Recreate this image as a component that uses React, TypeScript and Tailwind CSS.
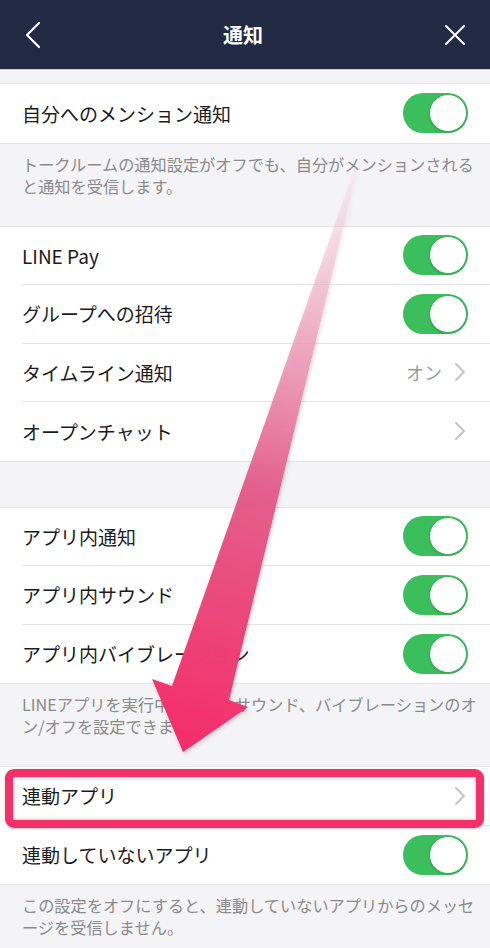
import React from "react";

const FONT = { fontFamily: '"Noto Sans CJK JP", "Noto Sans", sans-serif' };

function Toggle() {
  return (
    <div className="w-[65px] h-[40px] rounded-full bg-[#3bbf5c] flex items-center justify-end pr-[1px] shrink-0">
      <div className="w-[38px] h-[38px] rounded-full bg-white border border-[#36b055] shadow-[0_1px_2px_rgba(0,0,0,0.15)]" />
    </div>
  );
}

function Chevron() {
  return (
    <svg width="12" height="20" viewBox="0 0 12 20" className="shrink-0">
      <path d="M2 2 L10 10 L2 18" fill="none" stroke="#c4c4c8" strokeWidth="2" strokeLinecap="round" strokeLinejoin="round" />
    </svg>
  );
}

type RowProps = { label: string; right: "toggle" | "chevron" | "on"; last?: boolean };

function Row({ label, right, last }: RowProps) {
  return (
    <div className="bg-white pl-[22px]">
      <div className={`h-[58.5px] flex items-center justify-between pr-[22px] ${last ? "" : "border-b border-[#e4e4e6]"}`}>
        <span className="text-[19px] text-[#1a1a1a] leading-none">{label}</span>
        {right === "toggle" && <Toggle />}
        {right === "chevron" && <div className="pr-[2px]"><Chevron /></div>}
        {right === "on" && (
          <div className="flex items-center gap-[12px] pr-[2px]">
            <span className="text-[18px] text-[#9a9a9a] leading-none">オン</span>
            <Chevron />
          </div>
        )}
      </div>
    </div>
  );
}

function Desc({ children }: { children: React.ReactNode }) {
  return (
    <div className="h-[84px] border-t border-[#e4e4e6] border-b pl-[22px] pr-[10px] pt-[9px] text-[16.2px] leading-[22px] text-[#8a8a8a]">
      {children}
    </div>
  );
}

export default function App() {
  return (
    <div className="relative w-[490px] h-[948px] overflow-hidden bg-[#f4f4f6]" style={FONT}>
      {/* Header */}
      <div className="h-[70px] bg-[#222a44] flex items-center justify-between px-[24px] border-b border-[#c9ccd6]">
        <svg width="18" height="28" viewBox="0 0 18 28">
          <path d="M15 2 L3 14 L15 26" fill="none" stroke="#ffffff" strokeWidth="2.2" strokeLinecap="round" strokeLinejoin="round" />
        </svg>
        <span className="text-white font-bold text-[20px] leading-none">通知</span>
        <svg width="22" height="22" viewBox="0 0 22 22">
          <path d="M2 2 L20 20 M20 2 L2 20" fill="none" stroke="#ffffff" strokeWidth="2" strokeLinecap="round" />
        </svg>
      </div>

      <div className="h-[13px]" />
      <div className="border-t border-[#e4e4e6]">
        <Row label="自分へのメンション通知" right="toggle" last />
      </div>
      <Desc>
        トークルームの通知設定がオフでも、自分がメンションされると通知を受信します。
      </Desc>

      <div className="border-b border-[#e4e4e6]">
        <Row label="LINE Pay" right="toggle" />
        <Row label="グループへの招待" right="toggle" />
        <Row label="タイムライン通知" right="on" />
        <Row label="オープンチャット" right="chevron" last />
      </div>

      <div className="h-[45px]" />
      <div className="border-t border-[#e4e4e6]">
        <Row label="アプリ内通知" right="toggle" />
        <Row label="アプリ内サウンド" right="toggle" />
        <Row label="アプリ内バイブレーション" right="toggle" last />
      </div>
      <Desc>LINEアプリを実行中の通知、サウンド、バイブレーションのオン/オフを設定できます。</Desc>

      <div className="relative">
        <Row label="連動アプリ" right="chevron" />
        <Row label="連動していないアプリ" right="toggle" last />
        <div className="absolute left-[5px] right-[6px] top-[2px] h-[59px] rounded-[9px] border-[8px] border-[#f52f6a] shadow-[inset_0_0_4px_rgba(0,0,0,0.25),0_1px_3px_rgba(0,0,0,0.2)] pointer-events-none" />
      </div>
      <Desc>この設定をオフにすると、連動していないアプリからのメッセージを受信しません。</Desc>

      {/* Annotation arrow */}
      <svg className="absolute left-0 top-0 pointer-events-none" width="490" height="948" viewBox="0 0 490 948">
        <defs>
          <linearGradient id="ag" x1="356" y1="168" x2="183" y2="750" gradientUnits="userSpaceOnUse">
            <stop offset="0" stopColor="#f6c4d4" stopOpacity="0.15" />
            <stop offset="0.3" stopColor="#ee9ab7" stopOpacity="0.8" />
            <stop offset="0.55" stopColor="#e35c8a" stopOpacity="0.97" />
            <stop offset="1" stopColor="#f42c69" stopOpacity="1" />
          </linearGradient>
          <filter id="sh" x="-20%" y="-20%" width="140%" height="140%">
            <feDropShadow dx="1" dy="2" stdDeviation="2" floodColor="#000" floodOpacity="0.18" />
          </filter>
        </defs>
        <polygon
          points="355,167 358,167 229,700 248,707 183,752 152,679 172,686"
          fill="url(#ag)"
          filter="url(#sh)"
        />
      </svg>
    </div>
  );
}
